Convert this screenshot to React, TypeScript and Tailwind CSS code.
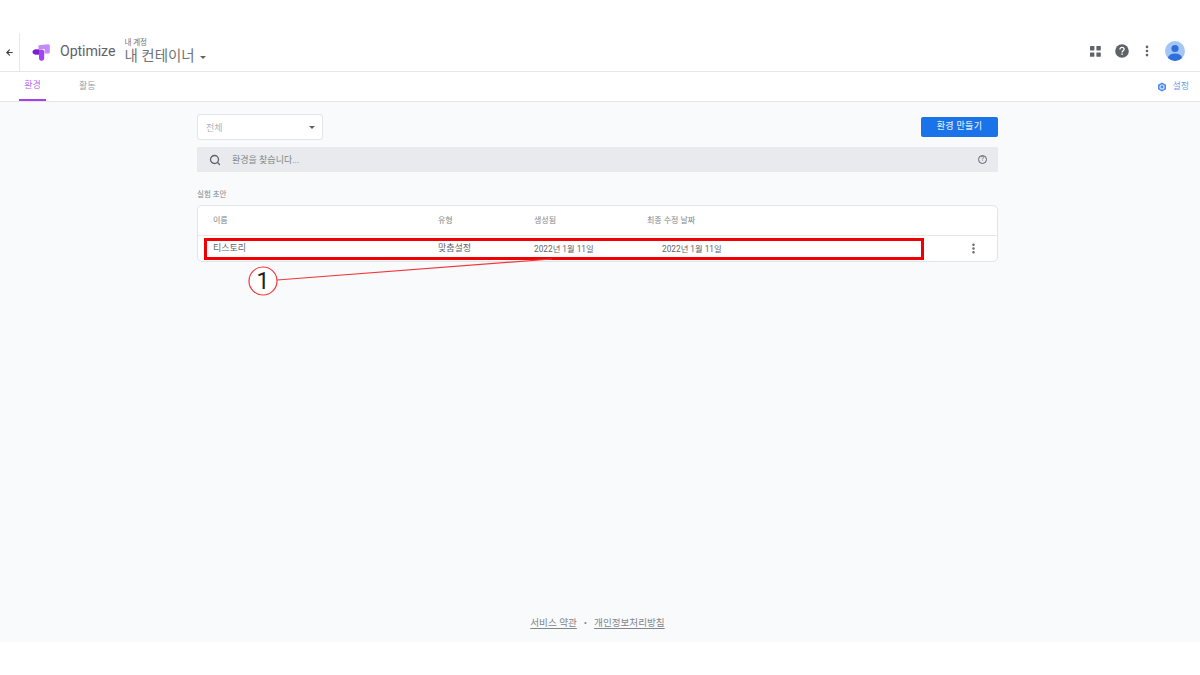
import { ArrowLeft, EllipsisVertical, Search } from "lucide-react";

const font = { fontFamily: '"Roboto", "Noto Sans CJK KR", sans-serif' };

const OptimizeLogo = () => (
  <svg width="18" height="17" viewBox="0 0 18 17">
    <path d="M6.5 1.2 L16 0.2 C17 0.1 17.8 0.8 17.8 1.8 L17.8 8.6 C17.8 9.1 17.4 9.5 16.9 9.5 L12.6 9.5 L12.6 5 L6.5 5 Z" fill="#c58af9" />
    <path d="M3 5.5 L10 5.5 C11.2 5.5 12.2 6.5 12.2 7.7 L12.2 14.6 C12.2 15.8 11.2 16.8 10 16.8 L9.2 16.8 C8 16.8 7 15.8 7 14.6 L7 10.5 L3 10.5 Z" fill="#a142f4" />
    <path d="M3 5.5 L7 5.5 L7 10.5 L3 10.5 C1.6 10.5 0.5 9.4 0.5 8 C0.5 6.6 1.6 5.5 3 5.5 Z" fill="#7b1fd0" />
  </svg>
);

const AppsIcon = () => (
  <svg width="11" height="11" viewBox="0 0 11 11" fill="#5f6368">
    <rect x="0" y="0" width="4.4" height="4.4" rx="0.6" />
    <rect x="6.4" y="0" width="4.4" height="4.4" rx="0.6" />
    <rect x="0" y="6.4" width="4.4" height="4.4" rx="0.6" />
    <rect x="6.4" y="6.4" width="4.4" height="4.4" rx="0.6" />
  </svg>
);

const HelpIcon = () => (
  <svg width="14" height="14" viewBox="0 0 14 14">
    <circle cx="7" cy="7" r="6.8" fill="#5f6368" />
    <path d="M4.9 5.5 C4.9 4.2 5.9 3.4 7 3.4 C8.2 3.4 9.1 4.2 9.1 5.3 C9.1 6.7 7.1 6.9 7.1 8.4" fill="none" stroke="#fff" strokeWidth="1.3" />
    <rect x="6.4" y="9.4" width="1.4" height="1.4" fill="#fff" />
  </svg>
);

const Avatar = () => (
  <svg width="20" height="20" viewBox="0 0 20 20">
    <defs>
      <clipPath id="avatar-clip">
        <circle cx="10" cy="10" r="10" />
      </clipPath>
    </defs>
    <circle cx="10" cy="10" r="10" fill="#a3c6f7" />
    <g clipPath="url(#avatar-clip)" fill="#2f6fdc">
      <circle cx="10" cy="7.5" r="3.6" />
      <ellipse cx="10" cy="17" rx="7" ry="4.6" />
    </g>
  </svg>
);

const GearIcon = () => (
  <svg width="10" height="10" viewBox="0 0 10 10">
    <path d="M5 0.4 L9 2.7 L9 7.3 L5 9.6 L1 7.3 L1 2.7 Z" fill="#4a8af0" />
    <circle cx="5" cy="5" r="2.6" fill="#d6e5fb" />
    <circle cx="5" cy="5" r="1.4" fill="#4a8af0" />
  </svg>
);

const Caret = ({ className }: { className: string }) => (
  <span className={`w-0 h-0 border-x-[3.5px] border-x-transparent border-t-[3.5px] ${className}`} />
);

export default function App() {
  return (
    <div className="relative w-[1200px] h-[675px] bg-white overflow-hidden flex flex-col" style={font}>
      <div className="h-[33px] shrink-0" />

      <header className="h-[39px] shrink-0 flex items-stretch border-b border-[#e6e6e6]">
        <div className="w-5 flex items-center justify-center border-r border-[#e8e8e8]">
          <ArrowLeft className="w-[9px] h-[9px] text-[#3c4043]" strokeWidth={3} />
        </div>
        <div className="pl-3 flex items-center">
          <OptimizeLogo />
        </div>
        <span className="ml-[10px] self-center text-[14.2px] text-[#5f6368] tracking-[-0.1px]">Optimize</span>
        <div className="ml-[9px] flex flex-col pt-[6px]">
          <span className="text-[7.5px] leading-[8px] text-[#6f7377]">내 계정</span>
          <div className="flex items-center gap-[5px] mt-[1px]">
            <span className="text-[14.5px] leading-[18px] text-[#6f7377]">내 컨테이너</span>
            <Caret className="border-t-[#5f6368]" />
          </div>
        </div>
        <div className="ml-auto flex items-center pr-[15px] pb-[2px]">
          <AppsIcon />
          <span className="ml-[14px]"><HelpIcon /></span>
          <EllipsisVertical className="ml-[11px] w-[14px] h-[14px] text-[#5f6368]" strokeWidth={2.6} />
          <span className="ml-[11px]"><Avatar /></span>
        </div>
      </header>

      <nav className="h-[30px] shrink-0 flex items-stretch border-b border-[#e6e6e6] bg-white">
        <div className="ml-[19px] w-[27px] pt-[1px] flex items-center justify-center border-b-2 border-[#a142f4] text-[9px] text-[#b26df0]">
          환경
        </div>
        <div className="ml-[33px] pt-[1px] flex items-center text-[9px] text-[#9aa0a6]">활동</div>
        <div className="ml-auto mr-[11px] pt-[1px] flex items-center gap-[5px] text-[9px] text-[#6a9ff2]">
          <GearIcon />
          <span>설정</span>
        </div>
      </nav>

      <main className="h-[540px] shrink-0 bg-[#f9fafc] flex flex-col">
        <div className="w-[801px] ml-[197px] flex flex-col flex-1">
          <div className="flex items-start justify-between mt-[12px]">
            <div className="w-[126px] h-[26px] bg-white border border-[#e3e4e6] rounded-[3px] flex items-center justify-between pl-2 pr-[7px] pt-[1px]">
              <span className="text-[9px] text-[#b0b3b7] pt-[2px]">전체</span>
              <Caret className="border-t-[#5f6368]" />
            </div>
            <div className="mt-[3px] w-[77px] h-[20px] bg-[#1a73e8] rounded-[2px] flex items-center justify-center text-[9px] text-[#dbe8fc] font-medium tracking-[0.3px]">
              환경 만들기
            </div>
          </div>

          <div className="mt-[7px] h-[25px] bg-[#e8eaed] rounded-[1px] flex items-center pl-3 pr-[11px]">
            <Search className="w-[12px] h-[12px] text-[#5f6368]" strokeWidth={2.6} />
            <span className="ml-[11px] pt-[2px] text-[9px] text-[#80868b]">환경을 찾습니다...</span>
            <span className="ml-auto w-[9px] h-[9px] rounded-full border border-[#5f6368] flex items-center justify-center text-[7px] leading-none text-[#5f6368]">?</span>
          </div>

          <div className="mt-[17px] pt-[1px] h-[10px] text-[7.5px] leading-[10px] text-[#80868b]">실험 초안</div>

          <div className="mt-[6px] bg-white border border-[#e3e4e6] rounded-[5px]">
            <div className="h-[30px] pt-[1px] border-b border-[#e6e6e6] flex items-center text-[8px] text-[#80868b]">
              <span className="ml-[15px] w-[225px]">이름</span>
              <span className="w-[96px]">유형</span>
              <span className="w-[113px]">생성됨</span>
              <span>최종 수정 날짜</span>
            </div>
            <div className="h-[25px] flex items-center text-[9px] text-[#5f6368]">
              <span className="ml-[15px] w-[225px] pt-[1px]">티스토리</span>
              <span className="w-[96px] pt-[1px]">맞춤설정</span>
              <span className="w-[128px] pt-[1px] text-[8.3px]">2022년 1월 11일</span>
              <span className="pt-[1px] text-[8.3px]">2022년 1월 11일</span>
              <EllipsisVertical className="ml-auto mr-[17px] w-[13px] h-[13px] text-[#5f6368]" strokeWidth={2.6} />
            </div>
          </div>

          <div className="mt-auto mb-[12px] flex items-center justify-center gap-[7px] text-[9.6px] text-[#80868b]">
            <span className="underline underline-offset-2">서비스 약관</span>
            <span>•</span>
            <span className="underline underline-offset-2">개인정보처리방침</span>
          </div>
        </div>
      </main>

      {/* annotation drawn over the screenshot */}
      <div className="absolute left-[204px] top-[238px] w-[720px] h-[22px] border-[3px] border-[#f00000]" />
      <svg className="absolute left-0 top-0 pointer-events-none" width="1200" height="675">
        <line x1="277" y1="280" x2="552" y2="259" stroke="#f0383c" strokeWidth="1.2" />
        <circle cx="263" cy="281" r="14" fill="#ffffff" stroke="#f0383c" strokeWidth="1.2" />
      </svg>
      <span className="absolute left-[249px] top-[267px] w-[28px] h-[28px] flex items-center justify-center text-[23px] leading-none text-[#222]" style={{ fontFamily: '"Roboto", sans-serif' }}>
        1
      </span>
    </div>
  );
}
